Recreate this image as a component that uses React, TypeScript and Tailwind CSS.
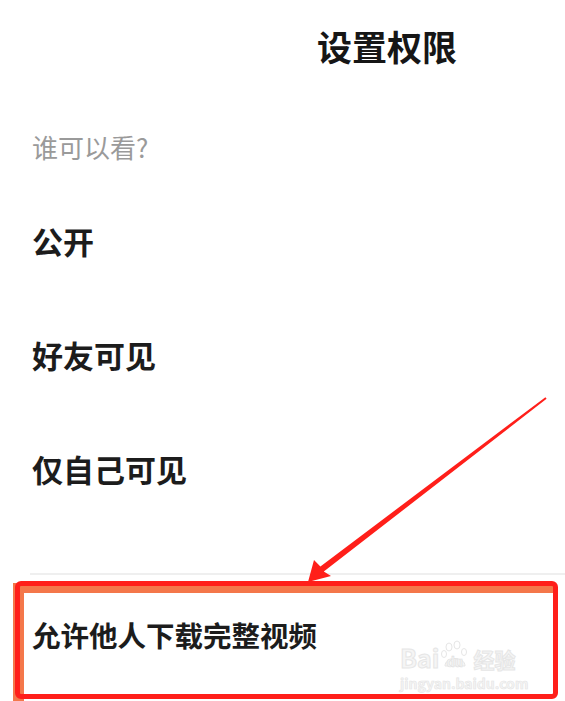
import React from "react";

const font = { fontFamily: '"Noto Sans CJK SC", "Noto Sans", sans-serif' };

function Row({ label }: { label: string }) {
  return (
    <div className="h-[114px] flex items-center pl-[32px]">
      <span className="text-[31px] font-bold text-[#1c1c1c] leading-none">{label}</span>
    </div>
  );
}

function Arrow() {
  return (
    <svg className="absolute left-0 top-0 pointer-events-none" width="565" height="701" viewBox="0 0 565 701">
      <polygon
        points="308,582 314,560 320.4,566.4 545.4,397.2 546.6,398.8 323.8,571.6 331,576"
        fill="#ff1f1a"
      />
    </svg>
  );
}

function Watermark() {
  return (
    <div className="absolute left-[400px] top-[640px] flex flex-col items-start select-none" style={font}>
      <div className="flex items-end gap-[1px]">
        <span className="text-[25px] font-bold leading-none text-[#f5f5f5]" style={{ WebkitTextStroke: "1px #e6e6e6" }}>
          Bai
        </span>
        <div className="relative w-[30px] h-[30px]">
          <svg width="30" height="30" viewBox="0 0 30 30" className="absolute left-0 top-0">
            <ellipse cx="9" cy="7" rx="3" ry="4" fill="none" stroke="#e6e6e6" />
            <ellipse cx="17" cy="5" rx="3" ry="4" fill="none" stroke="#e6e6e6" />
            <ellipse cx="4" cy="14" rx="2.5" ry="3.5" fill="none" stroke="#e6e6e6" />
            <ellipse cx="24" cy="12" rx="2.5" ry="3.5" fill="none" stroke="#e6e6e6" />
            <path d="M5 26 C5 16 25 16 25 26 Z" fill="#f6f6f6" stroke="#e6e6e6" />
          </svg>
          <span className="absolute left-[6px] top-[15px] text-[13px] font-bold leading-none text-[#f5f5f5]" style={{ WebkitTextStroke: "0.6px #e0e0e0" }}>
            du
          </span>
        </div>
        <span className="text-[21px] font-bold leading-none text-[#f5f5f5] ml-[2px]" style={{ WebkitTextStroke: "1px #e6e6e6" }}>
          经验
        </span>
      </div>
      <span className="text-[14px] font-bold leading-none text-[#f5f5f5] mt-[6px]" style={{ WebkitTextStroke: "0.6px #e4e4e4" }}>
        jingyan.baidu.com
      </span>
    </div>
  );
}

export default function App() {
  return (
    <div className="relative w-[565px] h-[701px] bg-white overflow-hidden" style={font}>
      {/* header */}
      <div className="h-[90px] flex items-center pl-[317px]">
        <span className="text-[35px] font-bold text-[#161616] leading-none">设置权限</span>
      </div>
      {/* subtitle */}
      <div className="h-[93px] pt-[44px] pl-[32px]">
        <span className="block text-[26px] leading-[26px] text-[#9a9a9a]">谁可以看?</span>
      </div>
      <Row label="公开" />
      <Row label="好友可见" />
      <Row label="仅自己可见" />
      {/* separator */}
      <div className="h-[48px]" />
      <div className="ml-[30px] h-[2px] bg-[#efefef]" />
      {/* bottom row */}
      <div className="pt-[8px] pl-[13px] pr-[10px]">
        <div className="h-[130px] border-t-[10px] border-l-[11px] border-[#f4774a] bg-white flex items-start pl-[8px] pt-[28px]">
          <span className="text-[28.5px] font-bold text-[#1c1c1c] leading-none">允许他人下载完整视频</span>
        </div>
      </div>
      <Watermark />
      {/* annotation box */}
      <div className="absolute left-[15px] top-[581px] w-[543px] h-[118px] border-[5px] border-[#ff1f1a] rounded-[6px]" />
      <Arrow />
    </div>
  );
}
